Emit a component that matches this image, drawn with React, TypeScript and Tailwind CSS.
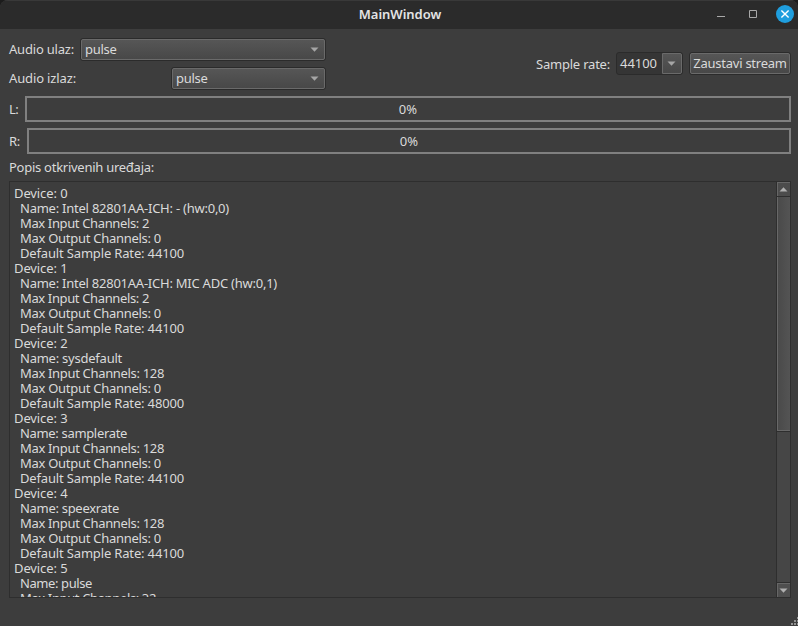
import { useLayoutEffect, useRef, useState } from "react";

type LabelProps = { children: string; width: number; className?: string };

/* Single-line label whose tracking is computed so that it fills `width` pixels. */
function Label({ children, width, className = "" }: LabelProps) {
  const ref = useRef<HTMLSpanElement>(null);
  const [tracking, setTracking] = useState(0);
  useLayoutEffect(() => {
    const natural = ref.current!.getBoundingClientRect().width;
    setTracking((width - natural) / children.length);
  }, [children, width]);
  return (
    <span ref={ref} className={`inline-block shrink-0 whitespace-pre ${className}`} style={{ letterSpacing: tracking }}>
      {children}
    </span>
  );
}

function Arrow({ up = false, className = "" }: { up?: boolean; className?: string }) {
  return (
    <svg width="9" height="5" viewBox="0 0 9 5" className={`shrink-0 ${className}`}>
      <path d={up ? "M0.5 4.5 L4.5 0.3 L8.5 4.5Z" : "M0.5 0.5 H8.5 L4.5 4.7Z"} fill="currentColor" />
    </svg>
  );
}

function Combo({ className }: { className: string }) {
  return (
    <div className={`h-[23px] rounded-[3px] border border-[#2b2b2b] ${className}`}>
      <div className="flex h-full items-center justify-between rounded-[2px] border border-[#6a6a6a] bg-linear-to-b from-[#565656] to-[#484848] pr-[5px] pl-[3px]">
        <Label width={31.5}>pulse</Label>
        <Arrow className="text-[#a6a6a6]" />
      </div>
    </div>
  );
}

function Meter({ name, width, gap }: { name: string; width: number; gap: string }) {
  return (
    <div className={`flex h-[26px] items-center ${gap}`}>
      <Label width={width}>{name}</Label>
      <div className="flex h-full flex-1 items-center justify-center border-2 border-[#808080]">
        <Label width={18.5}>0%</Label>
      </div>
    </div>
  );
}

const lines: [string, number][] = [
  ["Device: 0", 53.5],
  ["Name: Intel 82801AA-ICH: - (hw:0,0)", 209],
  ["Max Input Channels: 2", 129],
  ["Max Output Channels: 0", 141],
  ["Default Sample Rate: 44100", 164],
  ["Device: 1", 53.5],
  ["Name: Intel 82801AA-ICH: MIC ADC (hw:0,1)", 257],
  ["Max Input Channels: 2", 129],
  ["Max Output Channels: 0", 141],
  ["Default Sample Rate: 44100", 164],
  ["Device: 2", 53.5],
  ["Name: sysdefault", 102],
  ["Max Input Channels: 128", 144],
  ["Max Output Channels: 0", 141],
  ["Default Sample Rate: 48000", 164],
  ["Device: 3", 53.5],
  ["Name: samplerate", 107],
  ["Max Input Channels: 128", 144],
  ["Max Output Channels: 0", 141],
  ["Default Sample Rate: 44100", 164],
  ["Device: 4", 53.5],
  ["Name: speexrate", 99],
  ["Max Input Channels: 128", 144],
  ["Max Output Channels: 0", 141],
  ["Default Sample Rate: 44100", 164],
  ["Device: 5", 53.5],
  ["Name: pulse", 72],
  ["Max Input Channels: 32", 136],
];

export default function App() {
  return (
    <div className="bg-[#1c1c1c]">
      <div className="relative flex h-[626px] w-[798px] flex-col overflow-hidden rounded-t-[8px] bg-[#3d3d3d] font-['Noto_Sans',sans-serif] text-[13px] leading-[15px] text-[#dadada]">
        <header className="grid h-[29px] shrink-0 grid-cols-[1fr_auto_1fr] items-center border-t border-[#393939] bg-[#2b2b2b]">
          <span />
          <Label width={82.5} className="ml-[2px] pb-[2px] font-semibold text-[#e4e4e4]">MainWindow</Label>
          <div className="flex items-center justify-end pr-[4px] pb-[2px]">
            <svg width="42" height="18" viewBox="0 0 42 18" fill="none" stroke="#a9a9a9">
              <path d="M0 11.5h8M32.5 5.5h7v7h-7z" />
            </svg>
            <svg width="18" height="18" viewBox="0 0 18 18" className="ml-[17px]">
              <circle cx="9" cy="9" r="9" fill="#1f9ede" />
              <path d="M5.4 5.4l7.2 7.2M12.6 5.4l-7.2 7.2" stroke="white" strokeWidth="1.4" />
            </svg>
          </div>
        </header>

        <main className="flex flex-col pt-[9px] pr-[7px] pl-[9px]">
          <div className="flex justify-between">
            <div className="flex w-[317px] flex-col gap-[6px]">
              <div className="flex items-center justify-between">
                <Label width={65}>Audio ulaz:</Label>
                <Combo className="w-[246px]" />
              </div>
              <div className="flex items-center justify-between">
                <Label width={67}>Audio izlaz:</Label>
                <Combo className="w-[155px]" />
              </div>
            </div>
            <div className="mt-[14px] flex h-[23px] items-center">
              <Label width={74} className="pt-px">Sample rate:</Label>
              <div className="ml-[6px] flex h-[23px] w-[67px] rounded-[3px] border border-[#2b2b2b] bg-[#353535]">
                <div className="flex flex-1 items-center pl-[3px]">
                  <Label width={37}>44100</Label>
                </div>
                <div className="flex w-[20px] items-center justify-center rounded-r-[2px] border border-[#6a6a6a] bg-linear-to-b from-[#565656] to-[#484848]">
                  <Arrow className="mr-[2px] text-[#a6a6a6]" />
                </div>
              </div>
              <button className="ml-[6px] h-[23px] w-[102px] rounded-[3px] border border-[#2b2b2b]">
                <span className="flex h-full items-center justify-center rounded-[2px] border border-[#6a6a6a] bg-linear-to-b from-[#565656] to-[#484848]">
                  <Label width={93.5}>Zaustavi stream</Label>
                </span>
              </button>
            </div>
          </div>

          <div className="mt-[6px] flex flex-col gap-[6px]">
            <Meter name="L:" width={9} gap="gap-[7px]" />
            <Meter name="R:" width={11} gap="gap-[7px]" />
          </div>

          <Label width={145} className="mt-[6px] self-start">Popis otkrivenih uređaja:</Label>

          <section className="mt-[6px] flex h-[417px] border border-[#2e2e2e]">
            <div className="flex-1 overflow-hidden pt-[4px] pl-[4px]">
              {lines.map(([text, width], i) => (
                <div key={i} className={`h-[15px] whitespace-nowrap ${text.startsWith("Device") ? "" : "pl-[6px]"}`}>
                  <Label width={width}>{text}</Label>
                </div>
              ))}
            </div>
            <div className="flex w-[14px] flex-col border-l border-[#2e2e2e] bg-[#464646]">
              <div className="flex h-[14px] items-center justify-center border-t border-l border-[#666] bg-[#4c4c4c]">
                <Arrow up className="mr-[2px] text-[#b0b0b0]" />
              </div>
              <div className="h-[236px] border-y border-[#2e2e2e]">
                <div className="h-full border-b border-l border-[#686868] bg-linear-to-r from-[#4a4a4a] to-[#545454]" />
              </div>
              <div className="flex-1" />
              <div className="flex h-[15px] items-center justify-center border-t border-[#2e2e2e] bg-[#4f4f4f] shadow-[inset_1px_1px_0_#666]">
                <Arrow className="mr-px text-[#b0b0b0]" />
              </div>
            </div>
          </section>
        </main>

        <svg width="7" height="9" viewBox="0 0 7 9" className="absolute right-0 bottom-0" fill="#929292">
          <path d="M6 0h1v2H6zM3 3h2v2H3zM6 3h1v2H6zM0 6h2v2H0zM3 6h2v2H3zM6 6h1v2H6z" />
        </svg>
      </div>
    </div>
  );
}
